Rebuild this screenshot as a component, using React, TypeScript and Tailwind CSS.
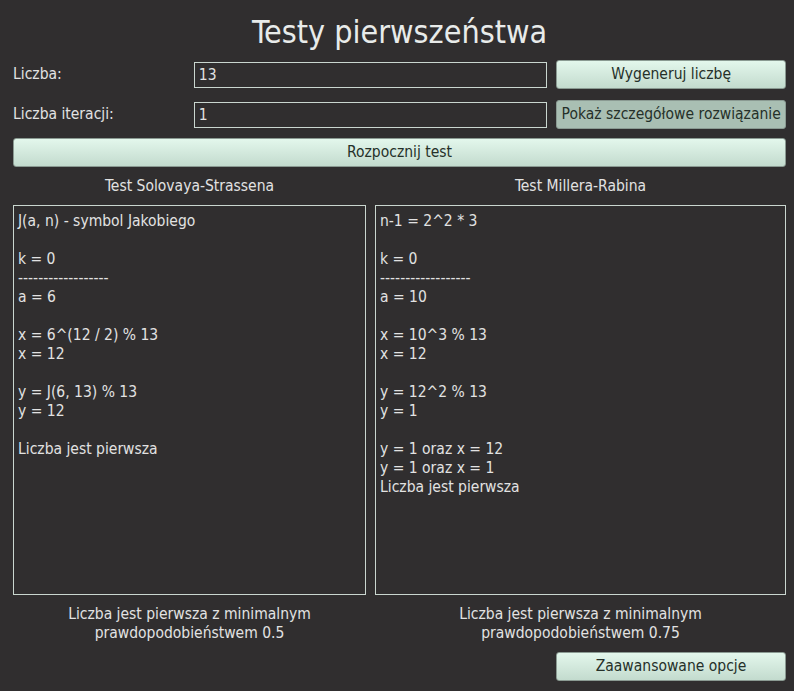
const font = { fontFamily: '"DejaVu Sans Condensed", "DejaVu Sans", sans-serif' }

const leftLines = [
  'J(a, n) - symbol Jakobiego',
  '',
  'k = 0',
  '------------------',
  'a = 6',
  '',
  'x = 6^(12 / 2) % 13',
  'x = 12',
  '',
  'y = J(6, 13) % 13',
  'y = 12',
  '',
  'Liczba jest pierwsza',
]

const rightLines = [
  'n-1 = 2^2 * 3',
  '',
  'k = 0',
  '------------------',
  'a = 10',
  '',
  'x = 10^3 % 13',
  'x = 12',
  '',
  'y = 12^2 % 13',
  'y = 1',
  '',
  'y = 1 oraz x = 12',
  'y = 1 oraz x = 1',
  'Liczba jest pierwsza',
]

function Btn({ children, dim, className = '' }: { children: React.ReactNode; dim?: boolean; className?: string }) {
  return (
    <button
      className={`h-[29px] rounded-[3px] border border-[#8a9a92] text-[15.5px] text-[#253029] ${
        dim ? 'bg-[#a9bfb3]' : 'bg-gradient-to-b from-[#e3f7ec] to-[#c3dbce]'
      } ${className}`}
    >
      {children}
    </button>
  )
}

function Output({ lines }: { lines: string[] }) {
  return (
    <div className="h-[390px] border border-[#c9d6cf] px-[4px] pt-[6px] text-[15.5px] leading-[19px] text-[#e2e2e2] whitespace-pre">
      {lines.map((l, i) => (
        <div key={i} className="h-[19px]">{l}</div>
      ))}
    </div>
  )
}

export default function App() {
  return (
    <div className="w-[794px] h-[691px] bg-[#302e2f] text-[#e2e2e2] pl-[13px] pr-[8px] pt-[12px]" style={font}>
      <h1 className="text-center text-[32px] leading-[40px] text-[#e8ebea]">Testy pierwszeństwa</h1>

      <div className="mt-[8px] flex items-center h-[29px]">
        <span className="w-[181px] text-[15.5px]">Liczba:</span>
        <div className="w-[354px] h-[26px] border border-[#c9d6cf] px-[4px] text-[15.5px] leading-[24px]">13</div>
        <Btn className="ml-[9px] w-[230px]">Wygeneruj liczbę</Btn>
      </div>

      <div className="mt-[11px] flex items-center h-[29px]">
        <span className="w-[181px] text-[15.5px]">Liczba iteracji:</span>
        <div className="w-[354px] h-[26px] border border-[#c9d6cf] px-[4px] text-[15.5px] leading-[24px]">1</div>
        <Btn dim className="ml-[9px] w-[230px]">Pokaż szczegółowe rozwiązanie</Btn>
      </div>

      <Btn className="mt-[9px] w-[773px] block">Rozpocznij test</Btn>

      <div className="mt-[9px] flex gap-[9px]">
        <div className="w-[353px]">
          <div className="text-center text-[15.5px] leading-[20px] mb-[9px]">Test Solovaya-Strassena</div>
          <Output lines={leftLines} />
          <div className="mt-[10px] text-center text-[15.5px] leading-[19px]">
            Liczba jest pierwsza z minimalnym
            <br />
            prawdopodobieństwem 0.5
          </div>
        </div>
        <div className="w-[411px]">
          <div className="text-center text-[15.5px] leading-[20px] mb-[9px]">Test Millera-Rabina</div>
          <Output lines={rightLines} />
          <div className="mt-[10px] text-center text-[15.5px] leading-[19px]">
            Liczba jest pierwsza z minimalnym
            <br />
            prawdopodobieństwem 0.75
          </div>
        </div>
      </div>

      <div className="flex justify-end">
        <Btn className="mt-[9px] w-[230px]">Zaawansowane opcje</Btn>
      </div>
    </div>
  )
}
